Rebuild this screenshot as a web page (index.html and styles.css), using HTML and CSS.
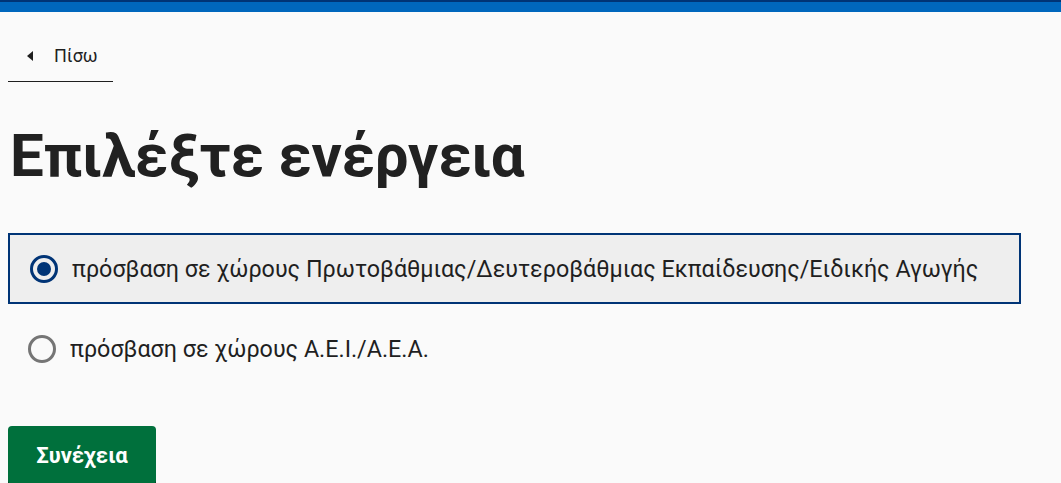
FILE: index.html
```html
<!DOCTYPE html>
<html lang="el">
<head>
<meta charset="utf-8">
<link rel="stylesheet" href="styles.css">
</head>
<body>
<header class="topbar"></header>
<main class="page">
  <a class="back" href="#"><span class="back-arrow"></span>Πίσω</a>
  <h1 class="title">Επιλέξτε ενέργεια</h1>
  <div class="options">
    <label class="option selected">
      <span class="radio checked"></span>
      <span class="option-text">πρόσβαση σε χώρους Πρωτοβάθμιας/Δευτεροβάθμιας Εκπαίδευσης/Ειδικής Αγωγής</span>
    </label>
    <label class="option">
      <span class="radio"></span>
      <span class="option-text">πρόσβαση σε χώρους Α.Ε.Ι./Α.Ε.Α.</span>
    </label>
  </div>
  <button class="continue">Συνέχεια</button>
</main>
</body>
</html>
```
FILE: styles.css
```css
html, body {
  margin: 0;
  padding: 0;
  background: #fafafa;
  font-family: Roboto, "Noto Sans", sans-serif;
  color: #1f1f1f;
}
.topbar {
  height: 10px;
  background: #0067bd;
  border-top: 2px solid #003476;
}
.page {
  padding: 0 8px;
  display: flex;
  flex-direction: column;
  align-items: flex-start;
}
.back {
  margin-top: 33px;
  display: flex;
  align-items: center;
  width: 105px;
  box-sizing: border-box;
  padding: 0 0 14px 19px;
  border-bottom: 1px solid #1f1f1f;
  color: #1f1f1f;
  text-decoration: none;
  font-size: 18px;
  line-height: 22px;
}
.back-arrow {
  width: 0;
  height: 0;
  border-top: 5px solid transparent;
  border-bottom: 5px solid transparent;
  border-right: 6px solid #1f1f1f;
  margin-right: 21px;
}
.title {
  margin: 39px 0 0 2px;
  font-size: 60px;
  line-height: 70px;
  letter-spacing: -0.3px;
  font-weight: 700;
  color: #212121;
}
.options {
  margin-top: 42px;
  display: flex;
  flex-direction: column;
  width: 1013px;
}
.option {
  display: flex;
  align-items: center;
  gap: 14px;
  padding: 0 0 0 20px;
  height: 70px;
  box-sizing: border-box;
  font-size: 23.3px;
}
.option.selected {
  background: #eeeeee;
  border: 2px solid #003476;
  height: 71px;
}
.option + .option {
  margin-top: 10px;
}
.radio {
  width: 28px;
  height: 28px;
  border-radius: 50%;
  box-sizing: border-box;
  border: 3px solid #757575;
  flex: none;
  display: flex;
  align-items: center;
  justify-content: center;
}
.radio.checked {
  border-color: #003476;
}
.radio.checked::after {
  content: "";
  width: 14px;
  height: 14px;
  border-radius: 50%;
  background: #003476;
}
.continue {
  margin-top: 42px;
  background: #00703c;
  color: #fff;
  border: none;
  border-radius: 4px;
  font-family: Roboto, "Noto Sans", sans-serif;
  font-weight: 700;
  font-size: 22px;
  width: 148px;
  height: 58px;
  padding: 0;
  box-shadow: 0 2px 0 #002d18;
}
```
